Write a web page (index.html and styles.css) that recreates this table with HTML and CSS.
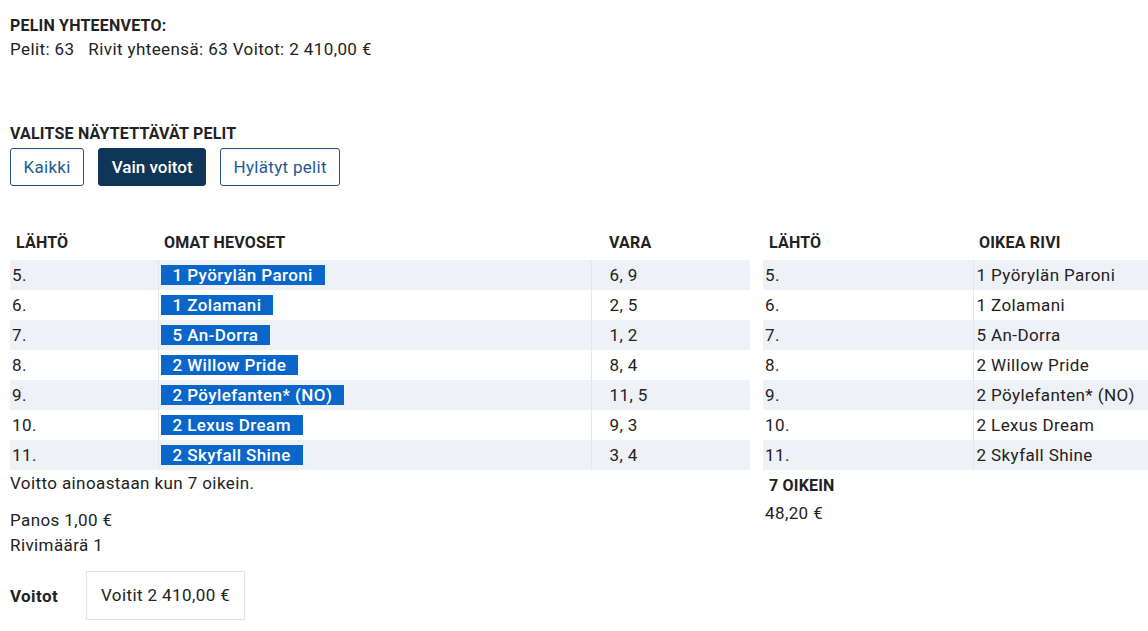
FILE: index.html
```html
<!DOCTYPE html>
<html lang="fi">
<head>
<meta charset="utf-8">
<link rel="stylesheet" href="styles.css">
</head>
<body>
<div class="page">
  <section class="summary">
    <h2 class="title">PELIN YHTEENVETO:</h2>
    <p class="summary-line">Pelit: 63&nbsp;&nbsp; Rivit yhteensä: 63 Voitot: 2 410,00 €</p>
  </section>

  <section class="filter">
    <h3 class="title">VALITSE NÄYTETTÄVÄT PELIT</h3>
    <div class="buttons">
      <button class="btn">Kaikki</button>
      <button class="btn active">Vain voitot</button>
      <button class="btn">Hylätyt pelit</button>
    </div>
  </section>

  <section class="results">
    <div class="left">
      <table class="tbl own">
        <thead>
          <tr><th class="c-start">LÄHTÖ</th><th class="c-horse">OMAT HEVOSET</th><th class="c-vara">VARA</th></tr>
        </thead>
        <tbody>
          <tr><td>5.</td><td><span class="hl">1 Pyörylän Paroni</span></td><td class="v">6, 9</td></tr>
          <tr><td>6.</td><td><span class="hl">1 Zolamani</span></td><td class="v">2, 5</td></tr>
          <tr><td>7.</td><td><span class="hl">5 An-Dorra</span></td><td class="v">1, 2</td></tr>
          <tr><td>8.</td><td><span class="hl">2 Willow Pride</span></td><td class="v">8, 4</td></tr>
          <tr><td>9.</td><td><span class="hl">2 Pöylefanten* (NO)</span></td><td class="v">11, 5</td></tr>
          <tr><td>10.</td><td><span class="hl">2 Lexus Dream</span></td><td class="v">9, 3</td></tr>
          <tr><td>11.</td><td><span class="hl">2 Skyfall Shine</span></td><td class="v">3, 4</td></tr>
        </tbody>
      </table>
      <p class="note">Voitto ainoastaan kun 7 oikein.</p>
      <div class="stake">
        <div>Panos 1,00 €</div>
        <div>Rivimäärä 1</div>
      </div>
      <div class="wins">
        <span class="wins-label">Voitot</span>
        <span class="wins-box">Voitit 2 410,00 €</span>
      </div>
    </div>

    <div class="right">
      <table class="tbl correct">
        <thead>
          <tr><th class="c-start2">LÄHTÖ</th><th>OIKEA RIVI</th></tr>
        </thead>
        <tbody>
          <tr><td>5.</td><td>1 Pyörylän Paroni</td></tr>
          <tr><td>6.</td><td>1 Zolamani</td></tr>
          <tr><td>7.</td><td>5 An-Dorra</td></tr>
          <tr><td>8.</td><td>2 Willow Pride</td></tr>
          <tr><td>9.</td><td>2 Pöylefanten* (NO)</td></tr>
          <tr><td>10.</td><td>2 Lexus Dream</td></tr>
          <tr><td>11.</td><td>2 Skyfall Shine</td></tr>
        </tbody>
      </table>
      <div class="payout">
        <div class="payout-title">7 OIKEIN</div>
        <div class="payout-value">48,20 €</div>
      </div>
    </div>
  </section>
</div>
</body>
</html>
```

FILE: styles.css
```css
* { box-sizing: border-box; }
html, body { margin: 0; padding: 0; background: #fff; }
body {
  font-family: Roboto, "Liberation Sans", sans-serif;
  font-size: 17px;
  letter-spacing: 0.4px;
  color: #222;
  overflow: hidden;
}
.page { padding: 16px 0 0 10px; width: 1160px; }

.title {
  margin: 0;
  font-size: 16px;
  font-weight: 700;
  letter-spacing: 0.2px;
  line-height: 20px;
  color: #222;
}
.summary-line { margin: 2px 0 0; line-height: 22px; }

.filter { margin-top: 64px; }
.buttons { display: flex; gap: 14px; margin-top: 4px; }
.btn {
  font-family: inherit;
  font-size: 17px;
  letter-spacing: 0.3px;
  height: 38px;
  padding: 0 12.5px;
  background: #fff;
  color: #1d5b94;
  border: 1px solid #1f4f7e;
  border-radius: 3px;
}
.btn.active { background: #0f3557; border-color: #0f3557; color: #fff; font-weight: 500; letter-spacing: 0; }

.results { display: flex; gap: 13px; margin-top: 38px; }
.left { width: 740px; flex: none; }
.right { flex: 1; }

.tbl { border-collapse: collapse; width: 100%; }
.tbl th {
  text-align: left;
  font-size: 16px;
  font-weight: 700;
  letter-spacing: 0.2px;
  height: 36px;
  padding: 0 0 0 6px;
}
.tbl td {
  height: 30px;
  padding: 0 0 0 2px;
  vertical-align: middle;
  white-space: nowrap;
}
.tbl tbody tr:nth-child(odd) td { background: #eef1f5; }
.tbl td + td { border-left: 1px solid #e5e7ea; }

.own .c-start { width: 148px; }
.own .c-horse { width: 433px; }
.own td.v, .own th.c-vara { padding-left: 18px; }
.own td:nth-child(2) { padding-left: 2px; }
.hl {
  display: inline-block;
  background: #0b66c9;
  color: #fff;
  font-weight: 500;
  line-height: 20px;
  padding: 0 12px;
}

.correct .c-start2 { width: 210px; }
.correct td:nth-child(2) { padding-left: 3px; }

.note { margin: 2px 0 0; line-height: 22px; }
.stake { margin-top: 14px; line-height: 25px; }
.wins { display: flex; align-items: center; gap: 22px; margin-top: 13px; }
.wins-label { font-weight: 700; width: 54px; }
.wins-box {
  display: inline-block;
  border: 1px solid #e3e3e3;
  padding: 0 14px;
  line-height: 47px;
}

.payout { padding: 6px 0 0 6px; }
.payout-title { font-weight: 700; font-size: 16px; letter-spacing: 0.2px; line-height: 20px; }
.payout-value { margin-left: -4px; line-height: 26px; margin-top: 4px; }
```
